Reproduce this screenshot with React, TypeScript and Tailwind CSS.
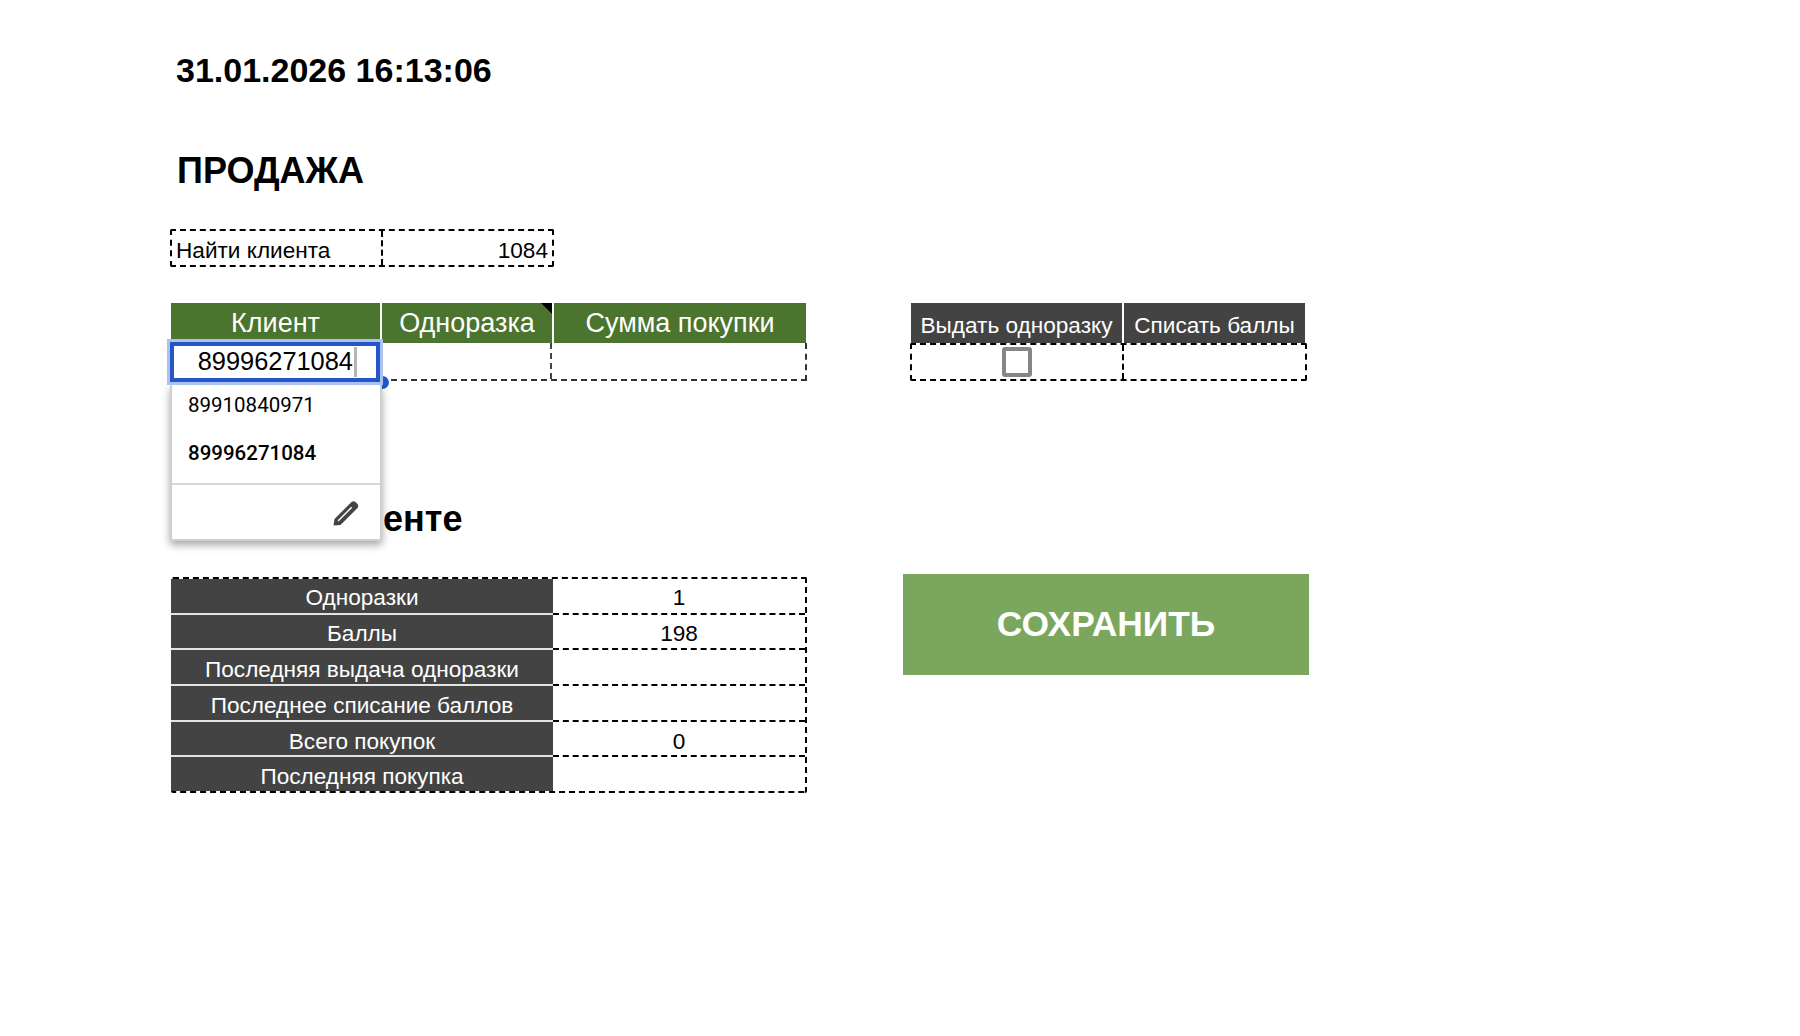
export default function App() {
  const rows: [string, string][] = [
    ["Одноразки", "1"],
    ["Баллы", "198"],
    ["Последняя выдача одноразки", ""],
    ["Последнее списание баллов", ""],
    ["Всего покупок", "0"],
    ["Последняя покупка", ""],
  ];
  return (
    <div className="min-h-[1036px] bg-white pl-[171px] text-black font-['Liberation_Sans',Arial,sans-serif]">
      <div className="pt-[50px] h-[90px] pl-[5px] text-[34px] leading-[40px] font-bold">31.01.2026 16:13:06</div>
      <div className="mt-[61px] h-[40px] pl-[6px] text-[36px] leading-[40px] font-bold">ПРОДАЖА</div>

      <div className="mt-[38px] -ml-[1px] flex w-[384px] h-[38px] border-2 border-dashed border-black text-[22.6px] leading-[39px] rounded-[2px]">
        <div className="w-[211px] pl-[4px] border-r-2 border-dashed border-black">Найти клиента</div>
        <div className="flex-1 pr-[4px] text-right">1084</div>
      </div>

      <div className="mt-[36px] flex items-start">
        <div className="relative w-[636px]">
          <div className="flex h-[40px] w-[635px] bg-[#4b742e] text-white text-[27px] leading-[40px] text-center">
            <div className="w-[209px]">Клиент</div>
            <div className="w-[2px] bg-white" />
            <div className="relative w-[170px]">
              Одноразка
              <div className="absolute right-0 top-0 w-0 h-0 border-t-[11px] border-l-[11px] border-t-black border-l-transparent" />
            </div>
            <div className="w-[2px] bg-white" />
            <div className="w-[252px]">Сумма покупки</div>
          </div>
          <div className="flex h-[38px] border-r-2 border-b-2 border-dashed border-[#333]">
            <div className="w-[211px]" />
            <div className="w-[170px] border-r-2 border-dashed border-[#444]" />
          </div>

          {/* selected-cell editor and autocomplete popup */}
          <div className="absolute left-[-4px] top-[36px] w-[216px] h-[46px] border-[3px] border-[#a9c2f1] z-20 bg-white">
            <div className="h-full border-[4px] border-[#2456c9] flex items-center justify-end pr-[19px] pb-[1px] text-[25.4px] bg-white">
              <span>89996271084</span>
              <span className="ml-[1px] w-[3px] h-[30px] bg-[#b5b5b5]" />
            </div>
          </div>
          <div className="absolute left-[205px] top-[73px] w-[13px] h-[13px] rounded-full bg-[#2456c9] z-[5]" />
          <div className="absolute left-[-1px] top-[82px] w-[212px] h-[156px] bg-white border-2 border-[#cfcfcf] border-t-0 shadow-[0_4px_8px_rgba(0,0,0,0.35)] z-10 font-['Roboto',sans-serif] text-[20.5px]">
            <div className="h-[100px] pl-[16px] pt-[6px] border-b-2 border-[#d6d6d6]">
              <div className="h-[48px] leading-[28px]">89910840971</div>
              <div className="h-[28px] leading-[28px] font-medium">89996271084</div>
            </div>
            <div className="flex justify-end pr-[21px] pt-[15px]">
              <svg width="26" height="26" viewBox="0 0 26 26" fill="none">
                <path d="M0.5 25.5 L1.5 19 L18.5 2 Q20.5 0.5 22.5 2 L24.5 4 Q26 6 24.5 8 L7.5 25 Z" fill="#444" />
                <path d="M4.6 21.4 L5 20 L18.2 6.8 L19.2 7.8 L6 21 Z" fill="#fff" />
              </svg>
            </div>
          </div>
        </div>

        <div className="ml-[103px] w-[397px]">
          <div className="flex h-[40px] ml-[1px] w-[394px] bg-[#434343] text-white text-[22.6px] leading-[46px] text-center">
            <div className="w-[211px] whitespace-nowrap">Выдать одноразку</div>
            <div className="w-[2px] bg-white" />
            <div className="flex-1 whitespace-nowrap">Списать баллы</div>
          </div>
          <div className="flex h-[38px] border-2 border-dashed border-black rounded-[2px]">
            <div className="w-[212px] border-r-2 border-dashed border-black flex items-center justify-center">
              <div className="w-[30px] h-[30px] border-[4px] border-[#868686] rounded-[3px]" />
            </div>
          </div>
        </div>
      </div>

      <div className="mt-[118px] h-[40px] pl-[6px] text-[36px] leading-[40px] font-bold">Инфо о клиенте</div>

      <div className="mt-[35px] flex items-start">
        <div className="mt-[3px] w-[636px] border-2 border-l-0 border-dashed border-black rounded-[2px]">
          {rows.map(([label, value], i) => (
            <div key={label} className={i < rows.length - 1 ? "flex h-[35.7px]" : "flex h-[33.5px]"}>
              <div
                className={
                  "w-[382px] bg-[#434343] text-white text-center text-[22.6px] " +
                  (i < 2 ? "leading-[38px] " : "leading-[40px] ") +
                  (i < rows.length - 1 ? "border-b-2 border-[#e4e4e4]" : "")
                }
              >
                {label}
              </div>
              <div
                className={
                  "flex-1 text-center text-[22.6px] " +
                  (i < 2 ? "leading-[38px] " : "leading-[40px] ") +
                  (i < rows.length - 1 ? "border-b-2 border-dashed border-black" : "")
                }
              >
                {value}
              </div>
            </div>
          ))}
        </div>
        <div className="ml-[96px] w-[406px] h-[101px] bg-[#7aa75d] text-white text-[35.4px] font-bold flex items-center justify-center">
          СОХРАНИТЬ
        </div>
      </div>
    </div>
  );
}
